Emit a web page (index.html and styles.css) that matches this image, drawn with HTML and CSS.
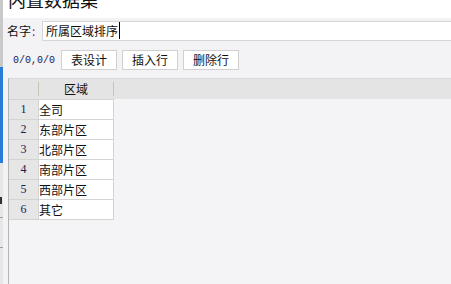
FILE: index.html
```html
<!DOCTYPE html>
<html lang="zh">

<head>
    <meta charset="UTF-8">
    <meta name="viewport" content="width=device-width, initial-scale=1.0">
    <title>内置数据集</title>
    <link rel="stylesheet" href="styles.css">
</head>

<body>
    <div class="desk">
        <div class="desk-top"></div>
        <div class="desk-blue"></div>
        <div class="desk-rest">
            <div class="mark-i"></div>
            <div class="desk-line first"></div>
            <div class="desk-line"></div>
        </div>
    </div>
    <div class="win">
        <div class="title"><span>内置数据集</span></div>
        <div class="namebar">
            <div class="label">名字<span class="colon">:</span></div>
            <div class="input"><span class="caret">所属区域排序</span></div>
        </div>
        <div class="toolbar">
            <div class="counter">0/0,0/0</div>
            <div class="btn">表设计</div>
            <div class="btn">插入行</div>
            <div class="btn">删除行</div>
        </div>
        <div class="grid">
            <div class="head">
                <div class="head-num"></div>
                <div class="head-col">区域</div>
            </div>
            <div class="rows">
                <div class="row"><div class="num">1</div><div class="cell">全司</div></div>
                <div class="row"><div class="num">2</div><div class="cell">东部片区</div></div>
                <div class="row"><div class="num">3</div><div class="cell">北部片区</div></div>
                <div class="row"><div class="num">4</div><div class="cell">南部片区</div></div>
                <div class="row"><div class="num">5</div><div class="cell">西部片区</div></div>
                <div class="row"><div class="num">6</div><div class="cell">其它</div></div>
            </div>
        </div>
    </div>
</body>

</html>
```

FILE: styles.css
```css
* {
    margin: 0;
    padding: 0;
    box-sizing: border-box;
}

html,
body {
    height: 100%;
}

body {
    display: flex;
    overflow: hidden;
    font-family: "Noto Sans CJK SC", "Liberation Sans", sans-serif;
    font-size: 12px;
    color: #111;
}

/* 背后的桌面 */
.desk {
    width: 3px;
    display: flex;
    flex-direction: column;
}

.desk-top {
    height: 67px;
    background-color: #c9c9c9;
}

.desk-blue {
    height: 96px;
    background-color: #2a7bd8;
}

.desk-rest {
    flex: 1;
    background-color: #e6e6e6;
}

.mark-i {
    margin-top: 34px;
    height: 7px;
    width: 2px;
    background-color: #3a3030;
}

.desk-line {
    margin-top: 29px;
    height: 1px;
    background-color: #9c9c9c;
}

.desk-line.first {
    margin-top: 13px;
}

/* 窗口 */
.win {
    flex: 1;
    min-width: 0;
    display: flex;
    flex-direction: column;
    background-color: #f3f3f5;
}

.title {
    height: 18px;
    overflow: hidden;
    background-color: #fff;
    padding-left: 5px;
    font-size: 18px;
    line-height: 18px;
    white-space: nowrap;
}

.title span {
    display: block;
    margin-top: -10px;
}

.namebar {
    display: flex;
    align-items: center;
    padding: 3px 0 0 4px;
}

.label {
    width: 35px;
    line-height: 20px;
}

.colon {
    color: #8a1a8a;
    margin-left: 1px;
}

.input {
    flex: 1;
    height: 20px;
    border: 1px solid #d6d6d6;
    border-right: none;
    background-color: #fff;
    padding-left: 3px;
    line-height: 18px;
    white-space: nowrap;
}

.caret {
    border-right: 1px solid #000;
    padding-right: 1px;
}

.toolbar {
    display: flex;
    align-items: center;
    gap: 5px;
    padding: 9px 0 8px 10px;
}

.counter {
    width: 42px;
    margin-right: 1px;
    font-family: "Liberation Mono", monospace;
    font-size: 10px;
    color: #1c2050;
}

.btn {
    width: 56px;
    height: 20px;
    border: 1px solid #d0d0d0;
    background-color: #fff;
    text-align: center;
    line-height: 18px;
}

/* 表格 */
.grid {
    flex: 1;
    margin-left: 5px;
    border-left: 1px solid #b4b4b4;
    border-top: 1px solid #d8d8d8;
    background-color: #f4f4f6;
}

.head {
    display: flex;
    align-items: center;
    height: 20px;
    background-color: #e4e4e4;
}

.head-num {
    width: 30px;
    height: 14px;
    border-right: 1px solid #c9c5b2;
}

.head-col {
    width: 75px;
    height: 14px;
    line-height: 14px;
    border-right: 1px solid #c9c5b2;
    text-align: center;
}

.rows {
    width: 105px;
    border-top: 1px solid #d4d4d4;
}

.row {
    display: flex;
    height: 20px;
}

.num {
    width: 30px;
    background-color: #e6e6e6;
    border-right: 1px solid #d4d4d4;
    border-bottom: 1px solid #d4d4d4;
    text-align: center;
    line-height: 19px;
    font-family: "Liberation Serif", serif;
    color: #1c2050;
}

.cell {
    width: 75px;
    background-color: #fff;
    border-right: 1px solid #d4d4d4;
    border-bottom: 1px solid #d4d4d4;
    line-height: 19px;
}
```
